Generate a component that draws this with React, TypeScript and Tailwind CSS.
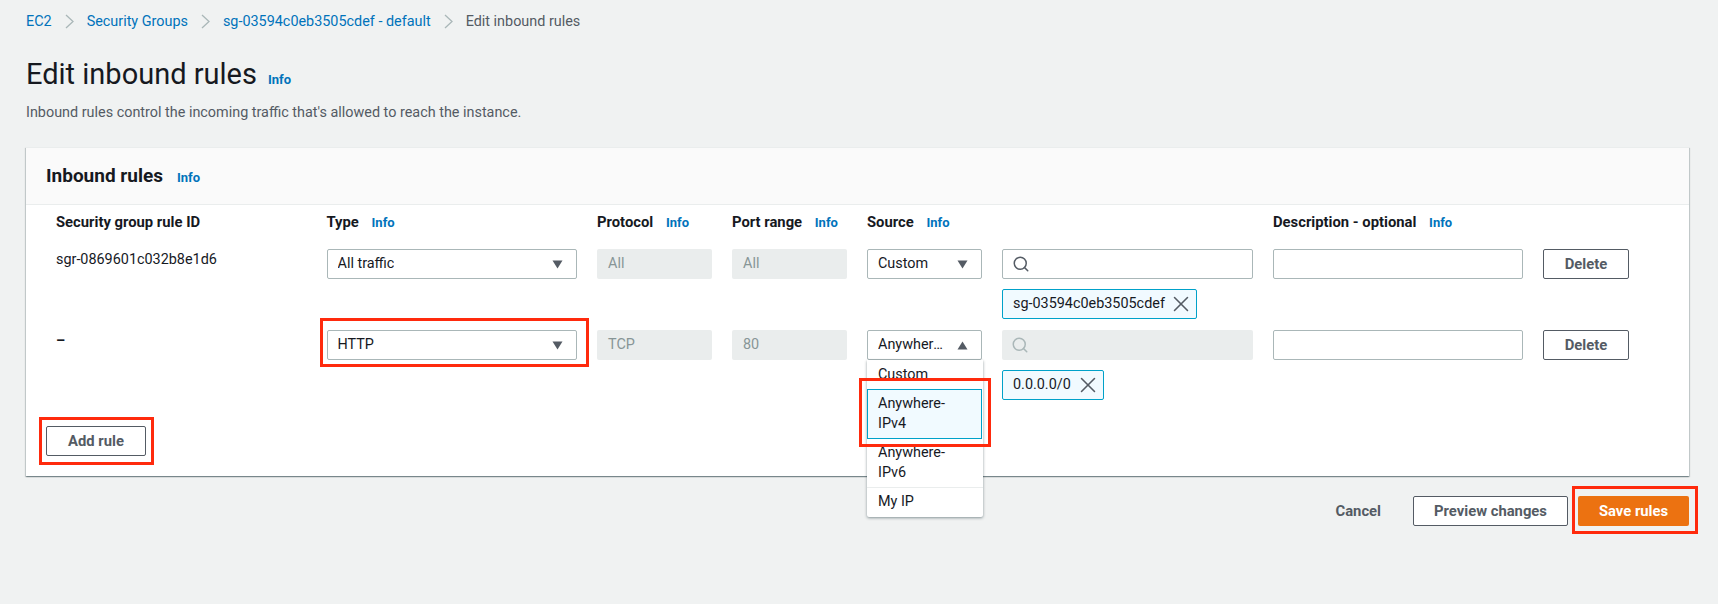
import { Search, X } from 'lucide-react'

function Info({ className = '' }: { className?: string }) {
  return <span className={`text-[13px] font-bold text-[#0073bb] ${className}`}>Info</span>
}

function Caret({ up = false }: { up?: boolean }) {
  return (
    <svg width="11" height="9" viewBox="0 0 11 9" className="shrink-0">
      <path d={up ? 'M5.5 0.5 L10.5 8.5 L0.5 8.5 Z' : 'M0.5 0.5 L10.5 0.5 L5.5 8.5 Z'} fill="#545b64" />
    </svg>
  )
}

function Chevron() {
  return (
    <svg width="9" height="15" viewBox="0 0 9 15" fill="none" className="mx-[13px] shrink-0">
      <path d="M1 1 L8 7.5 L1 14" stroke="#aab7b8" strokeWidth="1.3" />
    </svg>
  )
}

function Select({ label, up = false, textClass = '' }: { label: string; up?: boolean; textClass?: string }) {
  return (
    <div className="h-[30px] w-full flex items-center justify-between bg-white border border-[#aab7b8] rounded-[2px] pl-[10px] pr-[13px]">
      <span className={`truncate ${textClass}`}>{label}</span>
      <Caret up={up} />
    </div>
  )
}

function ReadOnly({ value }: { value: string }) {
  return (
    <div className="h-[30px] flex items-center px-[11px] bg-[#eaeded] rounded-[2px] text-[#879596]">{value}</div>
  )
}

function SearchBox({ disabled = false }: { disabled?: boolean }) {
  return (
    <div className={`h-[30px] flex items-center pl-[9px] rounded-[2px] ${disabled ? 'bg-[#eaeded]' : 'bg-white border border-[#aab7b8]'}`}>
      <Search size={18} strokeWidth={2} color={disabled ? '#aab7b8' : '#545b64'} />
    </div>
  )
}

function Token({ value, width }: { value: string; width: string }) {
  return (
    <div className={`mt-[10px] h-[30px] flex items-center justify-between pl-[10px] pr-[2px] bg-[#f1faff] border border-[#00a1c9] rounded-[2px] ${width}`}>
      <span>{value}</span>
      <X size={26} strokeWidth={1.4} color="#545b64" />
    </div>
  )
}

function Btn({ children }: { children: string }) {
  return (
    <div className="h-[30px] flex items-center justify-center bg-white border border-[#545b64] rounded-[2px] font-bold text-[14.8px] text-[#545b64]">
      {children}
    </div>
  )
}

function Redbox({ className }: { className: string }) {
  return <div className={`absolute border-[3px] border-[#ff2a0d] pointer-events-none z-20 ${className}`} />
}

function ColHead({ label }: { label: string }) {
  return (
    <div className="h-[20px] mt-[6px] font-bold text-[14.8px]">
      {label} <Info className="ml-[9px]" />
    </div>
  )
}

const crumbs = ['EC2', 'Security Groups', 'sg-03594c0eb3505cdef - default']

export default function App() {
  return (
    <div className="min-h-[604px] bg-[#f0f2f2] px-[26px] text-[14.4px] text-[#16191f] font-['Roboto',sans-serif]">
      {/* Breadcrumb */}
      <nav className="h-[44px] flex items-center">
        {crumbs.map((c) => (
          <div key={c} className="flex items-center">
            <span className="text-[#0073bb]">{c}</span>
            <Chevron />
          </div>
        ))}
        <span className="text-[#545b64]">Edit inbound rules</span>
      </nav>

      <div className="mt-[10px] flex items-baseline gap-[11px]">
        <h1 className="text-[29px] leading-[40px] font-normal">Edit inbound rules</h1>
        <Info />
      </div>
      <p className="mt-[9px] leading-[20px] text-[#545b64]">
        Inbound rules control the incoming traffic that's allowed to reach the instance.
      </p>

      {/* Panel */}
      <section className="mt-[24px] w-[1663px] bg-white border-t border-[#eaeded] shadow-[0_1px_1px_0_rgba(0,28,36,0.3),1px_1px_1px_0_rgba(0,28,36,0.15),-1px_1px_1px_0_rgba(0,28,36,0.15)]">
        <header className="h-[57px] flex items-center gap-[14px] px-[20px] bg-[#fafafa] border-b border-[#eaeded]">
          <h2 className="text-[19px] font-bold">Inbound rules</h2>
          <Info className="mt-[4px]" />
        </header>

        <div className="px-[30px] pb-[20px]">
          <div className="grid grid-cols-[250.5px_250.5px_115px_115px_115px_251px_250px_86px] gap-x-[20px]">
            {/* Column headings */}
            <div className="h-[20px] mt-[6px] mb-[18px] font-bold text-[14.8px]">Security group rule ID</div>
            <ColHead label="Type" />
            <ColHead label="Protocol" />
            <ColHead label="Port range" />
            <ColHead label="Source" />
            <div />
            <ColHead label="Description - optional" />
            <div />

            {/* Existing rule */}
            <div>sgr-0869601c032b8e1d6</div>
            <div><Select label="All traffic" /></div>
            <div><ReadOnly value="All" /></div>
            <div><ReadOnly value="All" /></div>
            <div><Select label="Custom" /></div>
            <div className="mb-[11px]">
              <SearchBox />
              <Token value="sg-03594c0eb3505cdef" width="w-[195px]" />
            </div>
            <div className="h-[30px] bg-white border border-[#aab7b8] rounded-[2px]" />
            <div><Btn>Delete</Btn></div>

            {/* New rule */}
            <div className="pt-[1px] leading-[20px] font-bold">–</div>
            <div className="relative h-[30px]">
              <Select label="HTTP" />
              <Redbox className="-left-[7px] -right-[12px] -top-[12px] -bottom-[7px]" />
            </div>
            <div><ReadOnly value="TCP" /></div>
            <div><ReadOnly value="80" /></div>
            <div className="relative h-[30px]">
              <Select label="Anywhere-IPv4" up textClass="w-[72px]" />
              <div className="absolute z-10 top-[30px] left-0 w-[116px] h-[157px] bg-white shadow-[0_1px_3px_rgba(0,28,36,0.45)] rounded-b-[2px] leading-[20px]">
                <div className="h-[29px] pl-[11px] pt-[5px] overflow-hidden">Custom</div>
                <div className="h-[50px] pl-[10px] py-[4px] bg-[#f1faff] border border-[#00a1c9] w-[115px]">
                  Anywhere-<br />IPv4
                </div>
                <div className="h-[49px] pl-[11px] pt-[4px] border-b border-[#eaeded]">
                  Anywhere-<br />IPv6
                </div>
                <div className="pl-[11px] pt-[4px]">My IP</div>
              </div>
              <Redbox className="-left-[8px] -right-[9px] top-[48px] -bottom-[87px]" />
            </div>
            <div>
              <SearchBox disabled />
              <Token value="0.0.0.0/0" width="w-[102px]" />
            </div>
            <div className="h-[30px] bg-white border border-[#aab7b8] rounded-[2px]" />
            <div><Btn>Delete</Btn></div>
          </div>

          <div className="relative mt-[26px] w-[100px] -ml-[10px]">
            <Btn>Add rule</Btn>
            <Redbox className="-left-[7px] -right-[8px] -top-[9px] -bottom-[9px]" />
          </div>
        </div>
      </section>

      {/* Footer actions */}
      <div className="mt-[20px] w-[1663px] flex items-center justify-end font-bold text-[14.8px] text-[#545b64]">
        <span className="mr-[32px]">Cancel</span>
        <div className="w-[155px] mr-[10px]"><Btn>Preview changes</Btn></div>
        <div className="relative w-[111px] h-[30px] flex items-center justify-center bg-[#ec7211] rounded-[2px] text-white">
          Save rules
          <Redbox className="-left-[6px] -right-[9px] -top-[10px] -bottom-[8px]" />
        </div>
      </div>
    </div>
  )
}
